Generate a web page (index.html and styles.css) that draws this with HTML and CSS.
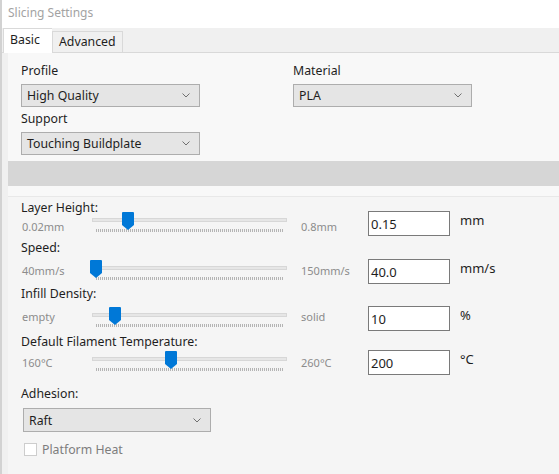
FILE: index.html
```html
<!DOCTYPE html>
<html lang="en">

<head>
    <meta charset="UTF-8">
    <title>Slicing Settings</title>
    <link rel="stylesheet" href="styles.css">
</head>

<body>
    <div class="app">
        <div class="title">Slicing Settings</div>

        <div class="tabs">
            <div class="tab active">Basic</div>
            <div class="tab">Advanced</div>
        </div>

        <div class="page">
            <div class="panel">
                <div class="general">
                    <div class="column">
                        <div class="label">Profile</div>
                        <div class="select">
                            <span>High Quality</span>
                            <svg class="chevron" viewBox="0 0 8 5"><path d="M0.5 0.5 L4 4 L7.5 0.5" /></svg>
                        </div>
                        <div class="label">Support</div>
                        <div class="select">
                            <span>Touching Buildplate</span>
                            <svg class="chevron" viewBox="0 0 8 5"><path d="M0.5 0.5 L4 4 L7.5 0.5" /></svg>
                        </div>
                    </div>
                    <div class="column">
                        <div class="label">Material</div>
                        <div class="select">
                            <span>PLA</span>
                            <svg class="chevron" viewBox="0 0 8 5"><path d="M0.5 0.5 L4 4 L7.5 0.5" /></svg>
                        </div>
                    </div>
                </div>

                <div class="band"></div>
                <div class="spacer"></div>

                <div class="sliders">
                    <div class="setting layer">
                        <div class="name">Layer Height:</div>
                        <div class="min">0.02mm</div>
                        <div class="slider">
                            <div class="track"></div>
                            <div class="ticks"></div>
                            <svg class="thumb" style="left: 30px" viewBox="0 0 12 18"><path d="M1 0 H11 Q12 0 12 1 V13 L6 18 L0 13 V1 Q0 0 1 0 Z" /></svg>
                        </div>
                        <div class="max">0.8mm</div>
                        <div class="value">0.15</div>
                        <div class="unit">mm</div>
                    </div>

                    <div class="setting speed">
                        <div class="name">Speed:</div>
                        <div class="min">40mm/s</div>
                        <div class="slider">
                            <div class="track"></div>
                            <div class="ticks"></div>
                            <svg class="thumb" style="left: -2px" viewBox="0 0 12 18"><path d="M1 0 H11 Q12 0 12 1 V13 L6 18 L0 13 V1 Q0 0 1 0 Z" /></svg>
                        </div>
                        <div class="max">150mm/s</div>
                        <div class="value">40.0</div>
                        <div class="unit">mm/s</div>
                    </div>

                    <div class="setting infill">
                        <div class="name">Infill Density:</div>
                        <div class="min">empty</div>
                        <div class="slider">
                            <div class="track"></div>
                            <div class="ticks"></div>
                            <svg class="thumb" style="left: 17px" viewBox="0 0 12 18"><path d="M1 0 H11 Q12 0 12 1 V13 L6 18 L0 13 V1 Q0 0 1 0 Z" /></svg>
                        </div>
                        <div class="max">solid</div>
                        <div class="value">10</div>
                        <div class="unit">%</div>
                    </div>

                    <div class="setting temp">
                        <div class="name">Default Filament Temperature:</div>
                        <div class="min">160°C</div>
                        <div class="slider">
                            <div class="track"></div>
                            <div class="ticks"></div>
                            <svg class="thumb" style="left: 73px" viewBox="0 0 12 18"><path d="M1 0 H11 Q12 0 12 1 V13 L6 18 L0 13 V1 Q0 0 1 0 Z" /></svg>
                        </div>
                        <div class="max">260°C</div>
                        <div class="value">200</div>
                        <div class="unit">°C</div>
                    </div>

                    <div class="label adhesion">Adhesion:</div>
                    <div class="select raft">
                        <span>Raft</span>
                        <svg class="chevron" viewBox="0 0 8 5"><path d="M0.5 0.5 L4 4 L7.5 0.5" /></svg>
                    </div>

                    <div class="check">
                        <span class="box"></span>
                        <span>Platform Heat</span>
                    </div>
                </div>
            </div>
        </div>
    </div>
</body>

</html>
```

FILE: styles.css
```css
* {
    margin: 0;
    padding: 0;
    box-sizing: border-box;
}

body {
    width: 559px;
    height: 474px;
    overflow: hidden;
    background-color: #fff;
    font-family: "Noto Sans", "Open Sans", sans-serif;
    font-size: 12.3px;
    color: #1e1e1e;
}

.app {
    height: 474px;
    border-left: 2px solid #d2d2d2;
    display: flex;
    flex-direction: column;
}

.title {
    height: 28px;
    flex-shrink: 0;
    padding-left: 6px;
    line-height: 26px;
    font-size: 12px;
    color: #a3a3a3;
}

/* tabs */

.tabs {
    height: 25px;
    flex-shrink: 0;
    display: flex;
    align-items: flex-end;
    padding-left: 1px;
    background-color: #f0f0f0;
    border-bottom: 1px solid #d9d9d9;
}

.tab {
    height: 21px;
    padding: 0 6px;
    border: 1px solid #d9d9d9;
    border-bottom: 0;
    line-height: 19px;
    background-color: #f0f0f0;
}

.tab.active {
    height: 25px;
    width: 49px;
    margin-bottom: -1px;
    line-height: 22px;
    background-color: #fff;
    border-right: 0;
}

/* page */

.page {
    flex: 1;
    min-height: 0;
    padding-left: 6px;
    background-color: #f0f0f0;
}

.panel {
    height: 100%;
    display: flex;
    flex-direction: column;
    background-color: #f8f8f8;
}

.general {
    height: 108px;
    flex-shrink: 0;
    padding: 10px 0 0 13px;
    display: grid;
    grid-template-columns: 272px 1fr;
}

.label {
    height: 16px;
    line-height: 16px;
}

.select {
    width: 179px;
    height: 23px;
    margin: 5px 0 4px;
    padding: 0 9px 0 5px;
    display: flex;
    align-items: center;
    justify-content: space-between;
    background-color: #e5e5e5;
    border: 1px solid #adadad;
}

.chevron {
    width: 8px;
    height: 5px;
    fill: none;
    stroke: #707070;
    stroke-width: 1;
}

.band {
    height: 25px;
    flex-shrink: 0;
    background-color: #d6d6d6;
}

.spacer {
    height: 11px;
    flex-shrink: 0;
    border-bottom: 1px solid #e8e8e8;
}

/* sliders */

.sliders {
    flex: 1;
    padding: 3px 0 0 13px;
    background-color: #f5f5f5;
}

.setting {
    display: grid;
    grid-template-columns: 71px 195px 14px 67px 82px 10px 1fr;
    grid-template-rows: 16px 20px;
}

.setting.speed {
    margin-top: 4px;
    grid-template-rows: 16px 28px;
}

.setting.infill {
    margin-top: 2px;
    grid-template-rows: 16px 29px;
}

.setting.temp {
    margin-top: 3px;
    grid-template-rows: 16px 25px;
}

.name {
    grid-row: 1;
    grid-column: 1 / 4;
    line-height: 16px;
    white-space: nowrap;
}

.min,
.max {
    grid-row: 2;
    align-self: center;
    font-size: 11px;
    color: #8c8c8c;
    padding-left: 1px;
}

.min {
    grid-column: 1;
}

.max {
    grid-column: 4;
    padding-left: 0;
}

.slider {
    grid-row: 1 / 3;
    grid-column: 2;
    align-self: end;
    position: relative;
    height: 24px;
}

.track {
    position: absolute;
    top: 6px;
    left: 0;
    right: 0;
    height: 4px;
    background-color: #e6e6e6;
    border: 1px solid #d7d7d7;
}

.ticks {
    position: absolute;
    top: 17px;
    left: 4px;
    right: 3px;
    height: 3px;
    background: repeating-linear-gradient(90deg, #b4b4b4 0 1px, transparent 1px 2px);
}

.thumb {
    position: absolute;
    top: 0;
    width: 12px;
    height: 18px;
    fill: #0078d7;
}

.value {
    grid-row: 1 / 3;
    grid-column: 5;
    align-self: end;
    height: 25px;
    padding-left: 2px;
    line-height: 24px;
    font-size: 13px;
    background-color: #fff;
    border: 1px solid #7a7a7a;
}

.unit {
    grid-row: 1 / 3;
    grid-column: 7;
    align-self: end;
    padding-bottom: 7px;
    font-size: 13px;
}

.adhesion {
    margin-top: 11px;
}

.select.raft {
    width: 188px;
    height: 24px;
    margin: 6px 0 0 2px;
}

.check {
    margin: 11px 0 0 3px;
    height: 13px;
    line-height: 13px;
    display: flex;
    align-items: center;
    gap: 5px;
    color: #7d7d7d;
}

.box {
    width: 13px;
    height: 13px;
    background-color: #fff;
    border: 1px solid #cdcdcd;
}
```
